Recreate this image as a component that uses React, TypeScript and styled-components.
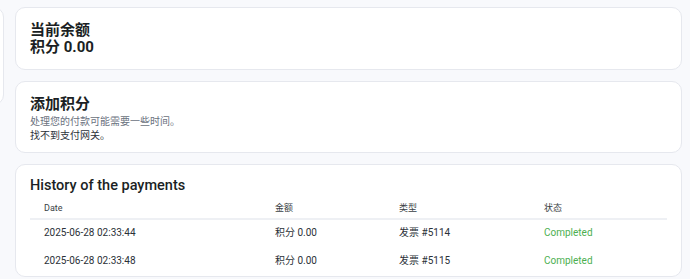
import React from "react";
import styled, { createGlobalStyle } from "styled-components";

const Global = createGlobalStyle`
  html, body { margin: 0; padding: 0; background: #f8f9fc; }
  body { font-family: Roboto, "Noto Sans CJK SC", sans-serif; color: #1f2329; }
`;

const Page = styled.div`
  display: flex;
  align-items: flex-start;
  gap: 11px;
  padding-top: 7px;
  margin-left: -96px;
  width: 778px;
`;

const Sidebar = styled.aside`
  width: 100px;
  height: 98px;
  flex: none;
  background: #fff;
  border: 1px solid #e6e8ee;
  border-radius: 10px;
  box-sizing: border-box;
`;

const Main = styled.main`
  flex: none;
  width: 667px;
  display: flex;
  flex-direction: column;
  gap: 11px;
`;

const Card = styled.section<{ $h?: number; $top: number }>`
  background: #fff;
  border: 1px solid #e6e8ee;
  border-radius: 10px;
  box-sizing: border-box;
  padding: ${(p) => p.$top}px 14px 0 14px;
  height: ${(p) => (p.$h ? `${p.$h}px` : "auto")};
`;

const Title = styled.h2`
  margin: 0;
  font-size: 15px;
  font-weight: 700;
  line-height: 17px;
  color: #1b1f24;
`;

const Amount = styled.div`
  font-size: 15px;
  font-weight: 700;
  line-height: 17px;
  color: #1b1f24;
`;

const Notes = styled.div`
  margin-top: 2px;
`;

const Note = styled.div<{ $muted?: boolean }>`
  font-size: 10px;
  line-height: 13.5px;
  color: ${(p) => (p.$muted ? "#6b7280" : "#2b3138")};
`;

const HistoryTitle = styled.h2`
  margin: 0;
  font-size: 14.5px;
  font-weight: 500;
  line-height: 17px;
  color: #1b1f24;
`;

const Table = styled.table`
  width: 100%;
  border-collapse: collapse;
  margin-top: 4px;
  table-layout: fixed;
`;

const Th = styled.th<{ $w: number }>`
  width: ${(p) => p.$w}px;
  text-align: left;
  font-weight: 400;
  font-size: 9px;
  color: #3a3f45;
  padding: 3px 0 4px 14px;
  height: 13px;
  border-bottom: 2px solid #eef0f4;
`;

const Td = styled.td<{ $ok?: boolean }>`
  font-size: 10px;
  line-height: 12px;
  color: ${(p) => (p.$ok ? "#4caf50" : "#2b3138")};
  padding: 7px 0 0 14px;
  height: 21px;
  vertical-align: top;
`;

const rows = [
  { date: "2025-06-28 02:33:44", amt: "积分 0.00", type: "发票 #5114", status: "Completed" },
  { date: "2025-06-28 02:33:48", amt: "积分 0.00", type: "发票 #5115", status: "Completed" },
];

export default function App() {
  return (
    <>
      <Global />
      <Page>
        <Sidebar />
        <Main>
          <Card $h={63} $top={14}>
            <Title>当前余额</Title>
            <Amount>积分 0.00</Amount>
          </Card>
          <Card $h={72} $top={14}>
            <Title>添加积分</Title>
            <Notes>
              <Note $muted>处理您的付款可能需要一些时间。</Note>
              <Note>找不到支付网关。</Note>
            </Notes>
          </Card>
          <Card $top={12}>
            <HistoryTitle>History of the payments</HistoryTitle>
            <Table>
              <thead>
                <tr>
                  <Th $w={217}>Date</Th>
                  <Th $w={110}>金额</Th>
                  <Th $w={131}>类型</Th>
                  <Th $w={123}>状态</Th>
                </tr>
              </thead>
              <tbody>
                {rows.map((r) => (
                  <tr key={r.type}>
                    <Td>{r.date}</Td>
                    <Td>{r.amt}</Td>
                    <Td>{r.type}</Td>
                    <Td $ok>{r.status}</Td>
                  </tr>
                ))}
              </tbody>
            </Table>
          </Card>
        </Main>
      </Page>
    </>
  );
}
